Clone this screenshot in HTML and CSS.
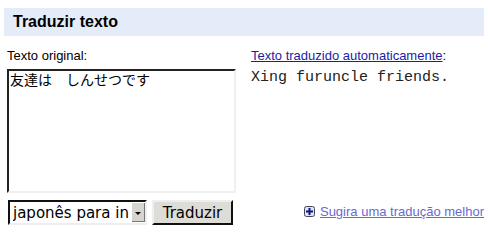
FILE: index.html
```html
<!DOCTYPE html>
<html lang="pt-br">
<head>
  <meta charset="UTF-8">
  <title>Traduzir texto</title>
  <link rel="stylesheet" href="styles.css">
</head>
<body>
  <div class="titulo">Traduzir texto</div>
  <div class="colunas">
    <div class="origem">
      <div class="rotulo">Texto original:</div>
      <textarea class="texto">友達は　しんせつです</textarea>
      <div class="controles">
        <span class="caixa-idiomas">
          <select class="idiomas">
            <option>japonês para inglês</option>
          </select>
        </span>
        <button class="traduzir">Traduzir</button>
      </div>
    </div>
    <div class="resultado">
      <div class="rotulo"><a href="#" class="auto">Texto traduzido automaticamente</a>:</div>
      <div class="saida">Xing furuncle friends.</div>
      <div class="sugerir">
        <svg class="mais" width="11" height="11" viewBox="0 0 11 11">
          <rect x="0.5" y="0.5" width="10" height="10" rx="2" fill="#dfe5f5" stroke="#445"/>
          <path d="M5.5 2v7M2 5.5h7" stroke="#0a1a80" stroke-width="2"/>
        </svg>
        <a href="#" class="melhor">Sugira uma tradução melhor</a>
      </div>
    </div>
  </div>
</body>
</html>
```

FILE: styles.css
```css
body {
  margin: 8px 4px;
  font-family: "Liberation Sans", Arial, sans-serif;
  font-size: 13px;
  color: #000;
  background: #fff;
}
.titulo {
  background-color: #e5ecf9;
  font-weight: bold;
  font-size: 16px;
  height: 28px;
  line-height: 28px;
  padding-left: 9px;
}
.colunas {
  display: flex;
  padding: 12px 0 0 3px;
}
.origem {
  width: 230px;
  display: flex;
  flex-direction: column;
}
.rotulo {
  height: 21px;
  line-height: 16px;
}
.texto {
  width: 229px;
  height: 124px;
  box-sizing: border-box;
  margin: 0;
  padding: 1px;
  border: 2px inset #f0f0f0;
  border-top-color: #777;
  border-left-color: #777;
  resize: none;
  font-family: "Noto Sans CJK JP", "DejaVu Sans", sans-serif;
  font-size: 14px;
  line-height: 15px;
}
.controles {
  display: flex;
  gap: 5px;
  margin-top: 7px;
  padding-left: 1px;
}
.caixa-idiomas {
  position: relative;
  display: block;
}
.caixa-idiomas::after {
  content: "";
  position: absolute;
  right: 2px;
  top: 3px;
  width: 13px;
  height: 19px;
  background: #d6d4ce;
  border-right: 1px solid #777;
  border-bottom: 1px solid #777;
  box-sizing: border-box;
  pointer-events: none;
}
.caixa-idiomas::before {
  content: "";
  position: absolute;
  right: 6px;
  top: 12px;
  border-left: 3px solid transparent;
  border-right: 3px solid transparent;
  border-top: 3px solid #000;
  z-index: 1;
  pointer-events: none;
}
.idiomas {
  appearance: none;
  width: 139px;
  height: 25px;
  font-family: "DejaVu Sans", sans-serif;
  font-size: 15px;
  border: 2px inset #eee;
  border-top-color: #666;
  border-left-color: #666;
  background: #fff;
  padding: 0 16px 0 3px;
  color: #000;
}
.traduzir {
  width: 81px;
  height: 25px;
  font-family: "DejaVu Sans", sans-serif;
  font-size: 15px;
  background-color: #dddcd6;
  border: 2px outset #eee;
  border-right-color: #666;
  border-bottom-color: #666;
  padding: 0;
  color: #000;
}
.resultado {
  flex: 1;
  margin-left: 14px;
  display: flex;
  flex-direction: column;
}
.auto {
  color: #1c1ca8;
}
.saida {
  font-family: "Liberation Mono", "Courier New", monospace;
  font-size: 15px;
  line-height: 17px;
  color: #222;
}
.sugerir {
  margin-top: auto;
  align-self: flex-end;
  display: flex;
  align-items: center;
  gap: 5px;
  padding-bottom: 6px;
}
.melhor {
  color: #6a6acc;
}
```
